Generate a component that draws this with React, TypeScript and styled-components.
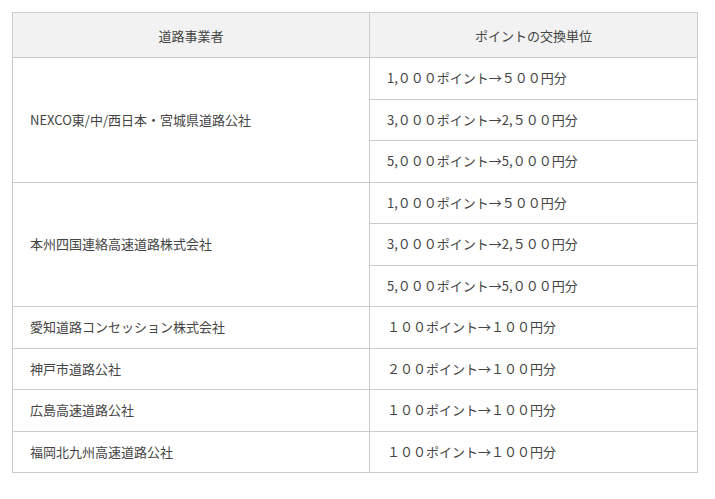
import React from 'react';
import styled, { createGlobalStyle } from 'styled-components';

type Operator = {
  name: string;
  rates: string[];
};

const operators: Operator[] = [
  {
    name: 'NEXCO東/中/西日本・宮城県道路公社',
    rates: ['1,０００ポイント→５００円分', '3,０００ポイント→2,５００円分', '5,０００ポイント→5,０００円分'],
  },
  {
    name: '本州四国連絡高速道路株式会社',
    rates: ['1,０００ポイント→５００円分', '3,０００ポイント→2,５００円分', '5,０００ポイント→5,０００円分'],
  },
  { name: '愛知道路コンセッション株式会社', rates: ['１００ポイント→１００円分'] },
  { name: '神戸市道路公社', rates: ['２００ポイント→１００円分'] },
  { name: '広島高速道路公社', rates: ['１００ポイント→１００円分'] },
  { name: '福岡北九州高速道路公社', rates: ['１００ポイント→１００円分'] },
];

const GlobalStyle = createGlobalStyle`
  body {
    margin: 0;
    background: #ffffff;
    font-family: "Noto Sans CJK JP", "Noto Sans", sans-serif;
  }
`;

const Page = styled.div`
  padding: 12px 17px 0 12px;
`;

const Table = styled.table`
  width: 686px;
  border-collapse: collapse;
  table-layout: fixed;
  color: #444444;
  font-size: 13px;
  border: 1px solid #cccccc;
`;

const HeadCell = styled.th<{ $w?: number }>`
  width: ${(p) => (p.$w ? `${p.$w}px` : 'auto')};
  height: 44px;
  padding: 0;
  background: #f2f2f2;
  border: 1px solid #cccccc;
  font-weight: 400;
  text-align: center;
  vertical-align: middle;
`;

const Cell = styled.td`
  height: 40.5px;
  padding: 0 0 0 17px;
  border: 1px solid #cccccc;
  vertical-align: middle;
  white-space: nowrap;
  line-height: 1.4;
`;

const App: React.FC = () => (
  <>
    <GlobalStyle />
    <Page>
      <Table>
        <thead>
          <tr>
            <HeadCell $w={356}>道路事業者</HeadCell>
            <HeadCell>ポイントの交換単位</HeadCell>
          </tr>
        </thead>
        <tbody>
          {operators.map((op) =>
            op.rates.map((rate, i) => (
              <tr key={`${op.name}-${i}`}>
                {i === 0 && <Cell rowSpan={op.rates.length}>{op.name}</Cell>}
                <Cell>{rate}</Cell>
              </tr>
            ))
          )}
        </tbody>
      </Table>
    </Page>
  </>
);

export default App;
